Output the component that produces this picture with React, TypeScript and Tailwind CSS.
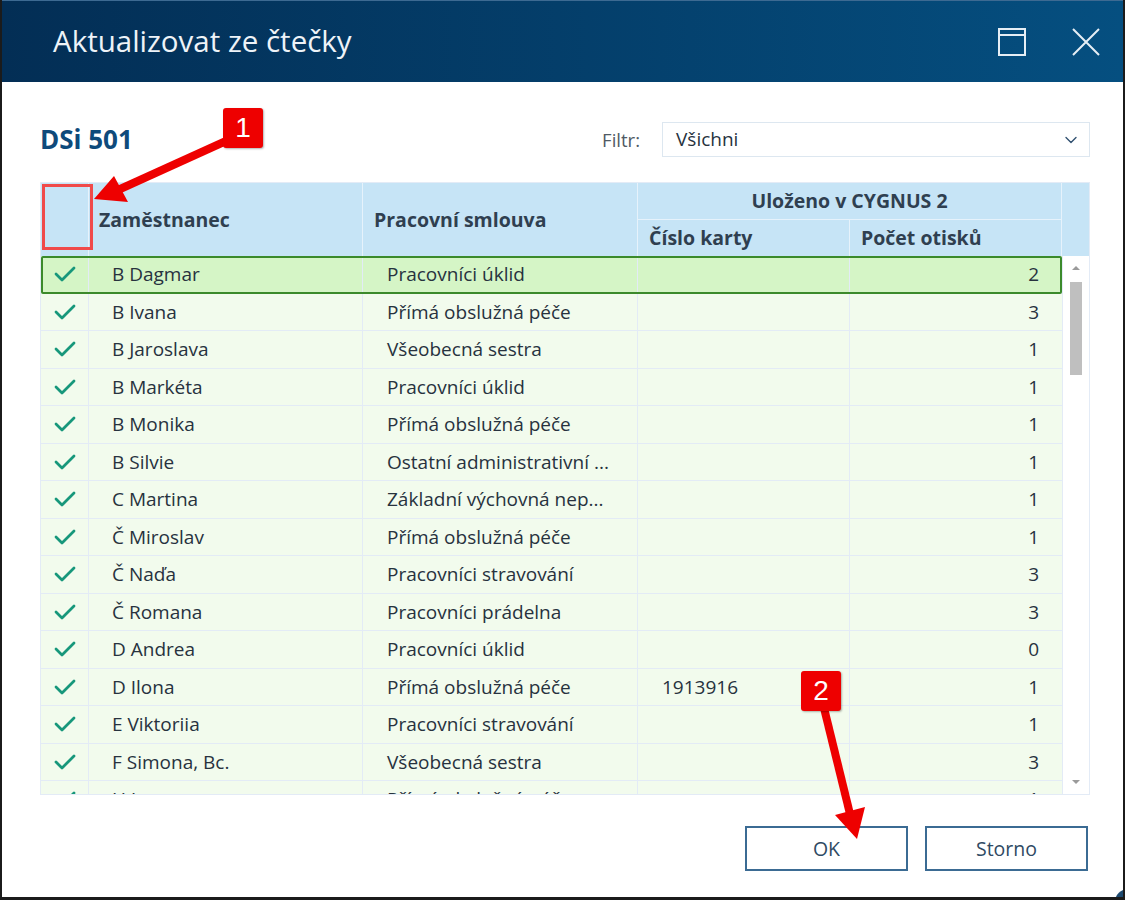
import { ChevronDown } from 'lucide-react';

type Row = { name: string; contract: string; card?: string; count: string };

const rows: Row[] = [
  { name: 'B Dagmar', contract: 'Pracovníci úklid', count: '2' },
  { name: 'B Ivana', contract: 'Přímá obslužná péče', count: '3' },
  { name: 'B Jaroslava', contract: 'Všeobecná sestra', count: '1' },
  { name: 'B Markéta', contract: 'Pracovníci úklid', count: '1' },
  { name: 'B Monika', contract: 'Přímá obslužná péče', count: '1' },
  { name: 'B Silvie', contract: 'Ostatní administrativní ...', count: '1' },
  { name: 'C Martina', contract: 'Základní výchovná nep...', count: '1' },
  { name: 'Č Miroslav', contract: 'Přímá obslužná péče', count: '1' },
  { name: 'Č Naďa', contract: 'Pracovníci stravování', count: '3' },
  { name: 'Č Romana', contract: 'Pracovníci prádelna', count: '3' },
  { name: 'D Andrea', contract: 'Pracovníci úklid', count: '0' },
  { name: 'D Ilona', contract: 'Přímá obslužná péče', card: '1913916', count: '1' },
  { name: 'E Viktoriia', contract: 'Pracovníci stravování', count: '1' },
  { name: 'F Simona, Bc.', contract: 'Všeobecná sestra', count: '3' },
  { name: 'H Jana', contract: 'Přímá obslužná péče', count: '1' },
];

function Check() {
  return (
    <svg width="22" height="16" viewBox="0 0 22 16" fill="none">
      <polyline points="2,8 8,14 20,2" stroke="#17977b" strokeWidth="2.8" strokeLinecap="round" strokeLinejoin="round" />
    </svg>
  );
}

function TableRow({ row, selected }: { row: Row; selected?: boolean }) {
  return (
    <div
      className={
        'flex h-[37.5px] shrink-0 items-center border-b border-[#e3ebf6] text-[19px] text-[#27323e] ' +
        (selected ? 'bg-[#d5f5c6] outline-2 -outline-offset-2 outline-[#3b8a2b] rounded-[2px]' : 'bg-[#f2fbed]')
      }
    >
      <div className="flex h-full w-[48px] items-center justify-center border-r border-[#e3ebf6]">
        <Check />
      </div>
      <div className="flex h-full w-[274px] items-center whitespace-nowrap border-r border-[#e3ebf6] pl-[23px]">{row.name}</div>
      <div className="flex h-full w-[275px] items-center whitespace-nowrap border-r border-[#e3ebf6] pl-[24px]">{row.contract}</div>
      <div className="flex h-full w-[212px] items-center border-r border-[#e3ebf6] pl-[24px]">{row.card ?? ''}</div>
      <div className="flex h-full w-[212px] items-center justify-end pr-[23px]">{row.count}</div>
    </div>
  );
}

export default function App() {
  return (
    <div className="relative h-[900px] w-[1125px] overflow-hidden border-x-2 border-b-[3px] border-[#1b1b1b] bg-white font-['Open_Sans',sans-serif]">
      {/* Title bar */}
      <header className="flex h-[82px] items-center justify-between border-t border-[#3d6a92] bg-gradient-to-r from-[#032e55] to-[#054f80] pl-[51px] pr-[22px]">
        <h1 className="text-[29.5px] text-[#eef3f8]">Aktualizovat ze čtečky</h1>
        <div className="flex items-center gap-[45px]">
          <svg width="28" height="28" viewBox="0 0 28 28" fill="none">
            <rect x="1" y="1" width="26" height="26" stroke="#e6eef5" strokeWidth="2" />
            <line x1="1" y1="7" x2="27" y2="7" stroke="#e6eef5" strokeWidth="2" />
          </svg>
          <svg width="30" height="30" viewBox="0 0 30 30" fill="none">
            <path d="M2 2 L28 28 M28 2 L2 28" stroke="#e6eef5" strokeWidth="2" />
          </svg>
        </div>
      </header>

      <main className="pl-[38px] pr-[33px] pt-[40px]">
        {/* Title + filter */}
        <div className="flex h-[35px] items-center justify-between">
          <h2 className="text-[26px] font-bold text-[#0e4a7b]">DSi 501</h2>
          <div className="flex items-center">
            <span className="text-[18.5px] text-[#505a64]">Filtr:</span>
            <div className="ml-[22px] flex h-[35px] w-[428px] items-center justify-between border border-[#dde7f0] pl-[13px] pr-[8px] text-[19px] text-[#27323e]">
              <span>Všichni</span>
              <ChevronDown size={20} strokeWidth={1.6} color="#2f4f6f" />
            </div>
          </div>
        </div>

        {/* Table */}
        <div className="mt-[25px] border border-[#e3ebf6]">
          <div className="grid grid-cols-[48px_274px_275px_212px_212px_27px] grid-rows-[36.5px_36.5px] bg-[#c6e4f6] text-[19.5px] font-bold text-[#2f3f50]">
            <div className="row-span-2 border-r border-[#e6f2fb]" />
            <div className="row-span-2 flex items-center border-r border-[#e6f2fb] pl-[10px]">Zaměstnanec</div>
            <div className="row-span-2 flex items-center border-r border-[#e6f2fb] pl-[11px]">Pracovní smlouva</div>
            <div className="col-span-2 flex items-center justify-center border-b border-r border-[#e6f2fb]">Uloženo v CYGNUS 2</div>
            <div className="row-span-2" />
            <div className="flex items-center border-r border-[#e6f2fb] pl-[11px]">Číslo karty</div>
            <div className="flex items-center border-r border-[#e6f2fb] pl-[11px]">Počet otisků</div>
          </div>

          <div className="flex h-[538px]">
            <div className="flex w-[1021px] flex-col overflow-hidden">
              {rows.map((r, i) => (
                <TableRow key={r.name} row={r} selected={i === 0} />
              ))}
            </div>
            {/* Scrollbar */}
            <div className="flex w-[27px] flex-col items-center border-l border-[#e3ebf6] bg-white pt-[10px] pb-[10px]">
              <div className="h-0 w-0 border-x-[4px] border-b-[4px] border-x-transparent border-b-[#9a9a9a]" />
              <div className="mt-[12px] h-[93px] w-[12px] bg-[#bfbfbf]" />
              <div className="flex-1" />
              <div className="h-0 w-0 border-x-[4px] border-t-[4px] border-x-transparent border-t-[#9a9a9a]" />
            </div>
          </div>
        </div>

        {/* Buttons */}
        <div className="mr-[2px] mt-[31px] flex justify-end gap-[17px]">
          <button className="h-[45px] w-[163px] border-2 border-[#3b6b93] text-[19.5px] text-[#2f4a63]">OK</button>
          <button className="h-[45px] w-[163px] border-2 border-[#3b6b93] text-[19.5px] text-[#2f4a63]">Storno</button>
        </div>
      </main>

      {/* Annotations */}
      <div className="absolute left-[40px] top-[184px] h-[66px] w-[51px] border-[3px] border-[#f04a4a]" />
      <svg className="pointer-events-none absolute left-0 top-0" width="1125" height="900">
        <line x1="224" y1="141" x2="116" y2="190" stroke="#ee0000" strokeWidth="8" />
        <polygon points="92,199 112,176 126,202" fill="#ee0000" />
        <line x1="822" y1="708" x2="848" y2="814" stroke="#ee0000" strokeWidth="8" />
        <polygon points="855,839 833,815 863,807" fill="#ee0000" />
      </svg>
      <div className="absolute left-[221px] top-[108px] flex h-[40px] w-[40px] items-center justify-center rounded-[3px] bg-[#ee0000] text-[28px] text-white shadow-[1px_1px_2px_rgba(0,0,0,0.3)] font-['Liberation_Sans',sans-serif]">1</div>
      <div className="absolute left-[799px] top-[671px] flex h-[40px] w-[40px] items-center justify-center rounded-[3px] bg-[#ee0000] text-[28px] text-white shadow-[1px_1px_2px_rgba(0,0,0,0.3)] font-['Liberation_Sans',sans-serif]">2</div>
      <div className="absolute -bottom-[18px] -right-[18px] h-[26px] w-[26px] rounded-full bg-[#1d4a70]" />
    </div>
  );
}
